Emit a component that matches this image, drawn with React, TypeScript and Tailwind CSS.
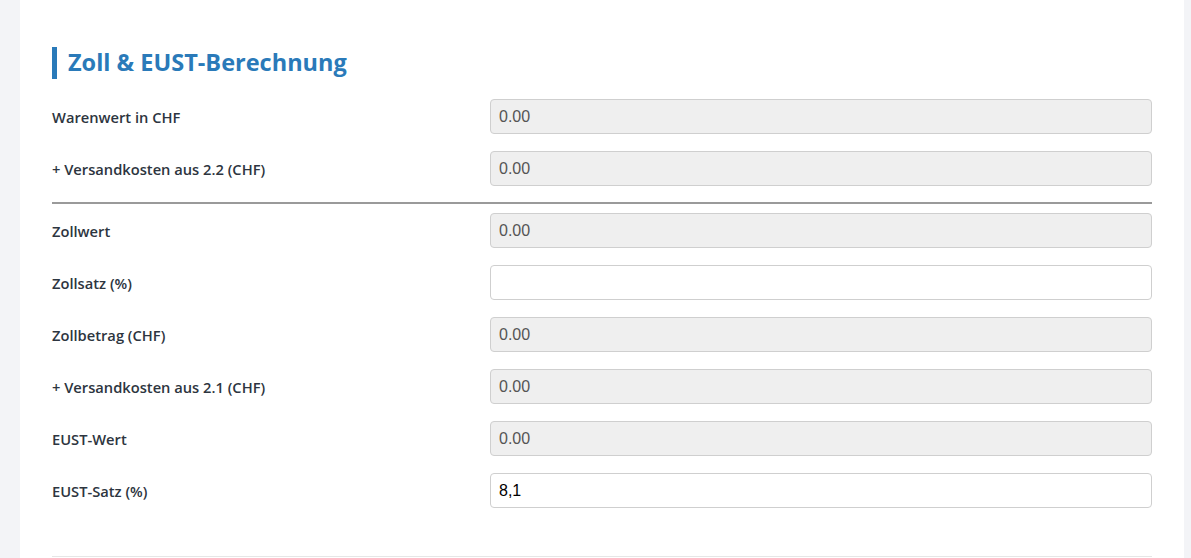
const rowsTop = [
  { label: "Warenwert in CHF", value: "0.00", readOnly: true },
  { label: "+ Versandkosten aus 2.2 (CHF)", value: "0.00", readOnly: true },
];

const rowsBottom = [
  { label: "Zollwert", value: "0.00", readOnly: true },
  { label: "Zollsatz (%)", value: "", readOnly: false },
  { label: "Zollbetrag (CHF)", value: "0.00", readOnly: true },
  { label: "+ Versandkosten aus 2.1 (CHF)", value: "0.00", readOnly: true },
  { label: "EUST-Wert", value: "0.00", readOnly: true },
  { label: "EUST-Satz (%)", value: "8,1", readOnly: false },
];

function Row({ label, value, readOnly }: { label: string; value: string; readOnly: boolean }) {
  return (
    <div className="flex items-center">
      <label className="w-[438px] shrink-0 pt-[1px] text-[14.7px] font-semibold text-[#2d3540] font-['Open_Sans',sans-serif]">
        {label}
      </label>
      <input
        readOnly
        defaultValue={value}
        className={
          readOnly
            ? "h-[35px] flex-1 rounded-[4px] border border-[#cfcfcf] bg-[#efefef] px-[8px] text-[16px] text-[#555] outline-none font-['Liberation_Sans',Arial,sans-serif]"
            : "h-[35px] flex-1 rounded-[4px] border border-[#cfcfcf] bg-white px-[8px] text-[16px] text-black outline-none font-['Liberation_Sans',Arial,sans-serif]"
        }
      />
    </div>
  );
}

export default function App() {
  return (
    <main className="min-h-screen bg-[#f3f4f7] pl-[20px] pr-[7px]">
      <section className="min-h-[558px] bg-white px-[32px] pt-[47px]">
        {/* HEADER */}
        <h2 className="flex h-[32px] items-center border-l-[5px] border-[#2a7ab9] pl-[11px] text-[23.5px] font-bold text-[#2a7ab9] font-['Open_Sans',sans-serif] leading-none">
          Zoll &amp; EUST-Berechnung
        </h2>

        <div className="mt-[20px] flex flex-col gap-[17px]">
          {rowsTop.map((r, i) => (
            <Row key={i} {...r} />
          ))}
        </div>

        <hr className="mt-[16px] mb-[9px] border-t-[2px] border-[#9a9a9a]" />

        <div className="flex flex-col gap-[17px]">
          {rowsBottom.map((r, i) => (
            <Row key={i} {...r} />
          ))}
        </div>

        <div className="mt-[48px] border-t border-[#e6e6e6]" />
      </section>
    </main>
  );
}
